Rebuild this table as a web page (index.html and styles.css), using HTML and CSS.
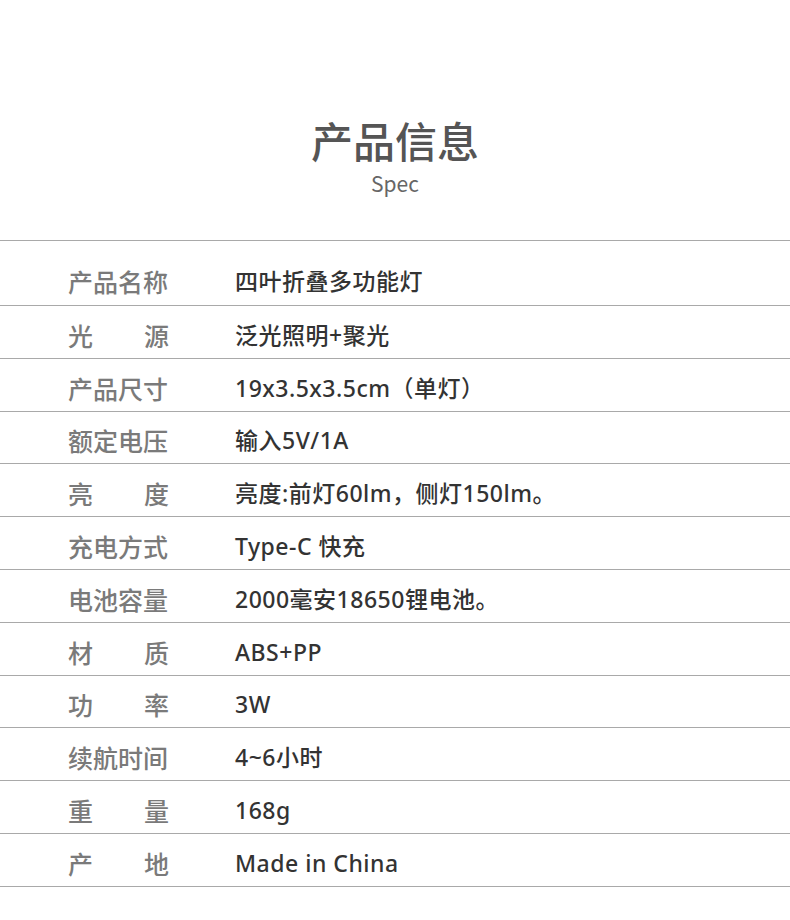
FILE: index.html
```html
<!DOCTYPE html>
<html lang="zh">
<head>
<meta charset="utf-8">
<link rel="stylesheet" href="styles.css">
</head>
<body>
<div class="page">
  <header class="head">
    <h1 class="title">产品信息</h1>
    <div class="sub">Spec</div>
  </header>
  <div class="spec">
    <div class="row first"><div class="label"><span>产品名称</span></div><div class="value">四叶折叠多功能灯</div></div>
    <div class="row"><div class="label two"><span>光</span><span>源</span></div><div class="value">泛光照明+聚光</div></div>
    <div class="row"><div class="label"><span>产品尺寸</span></div><div class="value">19x3.5x3.5cm（单灯）</div></div>
    <div class="row"><div class="label"><span>额定电压</span></div><div class="value">输入5V/1A</div></div>
    <div class="row"><div class="label two"><span>亮</span><span>度</span></div><div class="value">亮度:前灯60lm，侧灯150lm。</div></div>
    <div class="row"><div class="label"><span>充电方式</span></div><div class="value">Type-C 快充</div></div>
    <div class="row"><div class="label"><span>电池容量</span></div><div class="value">2000毫安18650锂电池。</div></div>
    <div class="row"><div class="label two"><span>材</span><span>质</span></div><div class="value">ABS+PP</div></div>
    <div class="row"><div class="label two"><span>功</span><span>率</span></div><div class="value">3W</div></div>
    <div class="row"><div class="label"><span>续航时间</span></div><div class="value">4~6小时</div></div>
    <div class="row"><div class="label two"><span>重</span><span>量</span></div><div class="value">168g</div></div>
    <div class="row"><div class="label two"><span>产</span><span>地</span></div><div class="value">Made in China</div></div>
  </div>
</div>
</body>
</html>
```
FILE: styles.css
```css
* { box-sizing: border-box; }
html, body { margin: 0; padding: 0; background: #fff; }
body {
  font-family: "Noto Sans CJK SC", "Noto Sans", sans-serif;
  width: 790px;
}
.page { width: 790px; }
.head {
  height: 240px;
  padding-top: 116px;
  text-align: center;
}
.title {
  margin: 0;
  font-size: 42px;
  line-height: 48px;
  font-weight: 500;
  color: #555;
}
.sub {
  margin-top: 6px;
  font-size: 21px;
  line-height: 26px;
  color: #666;
  font-weight: 400;
}
.spec { border-top: 1.5px solid #a9a9a9; }
.row {
  display: flex;
  align-items: center;
  height: 52.8px;
  padding-top: 6px;
  border-bottom: 1.5px solid #a9a9a9;
}
.row.first { height: 65px; padding-top: 16px; }
.label {
  width: 101px;
  margin-left: 68px;
  display: flex;
  justify-content: space-between;
  font-size: 25px;
  line-height: 32px;
  color: #7a7a7a;
  font-weight: 500;
}
.value {
  margin-left: 66px;
  font-family: "Noto Sans", "Noto Sans CJK SC", sans-serif;
  font-size: 23px;
  line-height: 32px;
  letter-spacing: 0.5px;
  color: #333;
  font-weight: 500;
}
```
